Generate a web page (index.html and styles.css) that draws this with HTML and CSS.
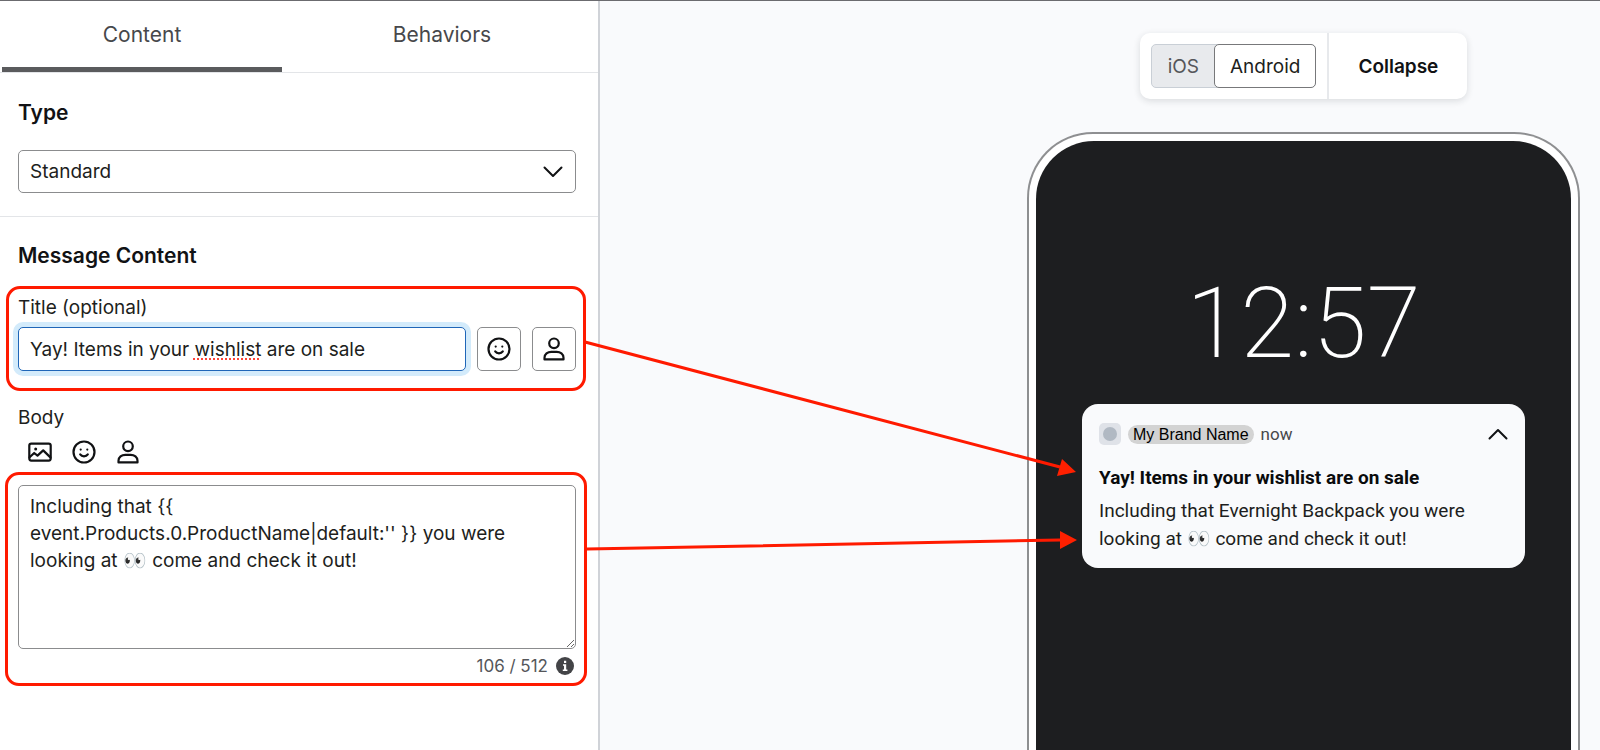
FILE: index.html
```html
<!DOCTYPE html>
<html lang="en">
<head>
<meta charset="utf-8">
<title>Push notification editor</title>
<link rel="stylesheet" href="styles.css">
</head>
<body>
<svg class="sprite" aria-hidden="true">
  <symbol id="i-smile" viewBox="0 0 24 24"><circle cx="12" cy="12" r="10.5"/><circle class="dot" cx="8.7" cy="9.6" r="1.1"/><circle class="dot" cx="15.3" cy="9.6" r="1.1"/><path d="M8.2 14.4c1.7 2.5 5.9 2.5 7.6 0"/></symbol>
  <symbol id="i-person" viewBox="0 0 24 24"><circle cx="12" cy="6.3" r="4.8"/><path d="M2.500 22.400v-1.600c0-3.600 3.200-6 6.800-6h5.400c3.600 0 6.800 2.400 6.800 6v1.600z"/></symbol>
  <symbol id="i-image" viewBox="0 0 24 24"><rect x="1.300" y="3.600" width="21.400" height="17" rx="2"/><path d="M1.600 17.300l4.600-4.300 3.300 2.600 5.700-5.200 7.200 7"/><circle class="dot" cx="7.700" cy="9" r="1.500"/></symbol>
</svg>
<div class="app">
  <main class="panel">
    <nav class="tabs">
      <button class="tab tab-active" type="button">Content</button>
      <button class="tab" type="button">Behaviors</button>
    </nav>
    <section class="section section-type">
      <h2 class="heading"><label for="type">Type</label></h2>
      <div class="select-wrap">
        <select class="control select" id="type"><option>Standard</option></select>
        <svg class="select-arrow" viewBox="0 0 20 12" aria-hidden="true"><path d="M1.500 1.500L10 10l8.500-8.500"/></svg>
      </div>
    </section>
    <section class="section section-message">
      <h2 class="heading">Message Content</h2>
      <div class="field title-field">
        <label class="label" for="title">Title (optional)</label>
        <div class="title-row">
          <div class="input-wrap">
            <input class="control input" id="title" type="text" value="Yay! Items in your wishlist are on sale">
            <span class="spelling"></span>
          </div>
          <button class="icon-button" type="button" aria-label="Insert emoji"><svg class="icon"><use href="#i-smile"/></svg></button>
          <button class="icon-button" type="button" aria-label="Insert profile property"><svg class="icon"><use href="#i-person"/></svg></button>
        </div>
      </div>
      <label class="label body-label" for="body">Body</label>
      <div class="tools">
        <button class="tool" type="button" aria-label="Insert image"><svg class="icon"><use href="#i-image"/></svg></button>
        <button class="tool" type="button" aria-label="Insert emoji"><svg class="icon"><use href="#i-smile"/></svg></button>
        <button class="tool" type="button" aria-label="Insert profile property"><svg class="icon"><use href="#i-person"/></svg></button>
      </div>
      <div class="field body-field">
        <textarea class="control textarea" id="body" spellcheck="false">Including that {{
event.Products.0.ProductName|default:'' }} you were
looking at 👀 come and check it out!</textarea>
        <div class="counter">
          <span>106 / 512</span>
          <svg class="info" viewBox="0 0 18 18" aria-hidden="true"><circle cx="9" cy="9" r="9"/><path d="M8 3.800h2.200v2.200H8zM7 7.300h3.200v5.200h1.200v1.500H6.800v-1.500H8V8.800H7z"/></svg>
        </div>
      </div>
    </section>
  </main>
  <aside class="preview">
    <div class="stage">
      <div class="toolbar">
        <div class="toolbar-part">
          <div class="segments">
            <button class="segment" type="button">iOS</button>
            <button class="segment segment-active" type="button">Android</button>
          </div>
        </div>
        <button class="collapse" type="button">Collapse</button>
      </div>
      <div class="phone">
        <div class="screen">
          <div class="clock">12:57</div>
          <article class="card">
            <header class="card-head">
              <span class="app-icon"></span>
              <span class="brand">My Brand Name</span>
              <span class="when">now</span>
              <svg class="card-arrow" viewBox="0 0 20 12" aria-hidden="true"><path d="M1.500 10.500L10 2l8.500 8.500"/></svg>
            </header>
            <h3 class="card-title">Yay! Items in your wishlist are on sale</h3>
            <p class="card-body">Including that Evernight Backpack you were looking at 👀 come and check it out!</p>
          </article>
        </div>
      </div>
    </div>
  </aside>
  <svg class="arrows" viewBox="0 0 1600 750" aria-hidden="true">
    <path class="line" d="M585 342L1060 467M587 549L1060 540"/>
    <path class="head" d="M1076 472L1062 459L1057 476zM1077 540L1060 531V549z"/>
  </svg>
</div>
</body>
</html>
```
FILE: styles.css
```css
* { box-sizing: border-box; }
body { margin: 0; font-family: Inter, "Liberation Sans", sans-serif; font-size: 19px; color: #1d1e20; }
button, input, select, textarea { font: inherit; color: inherit; margin: 0; }
.sprite { position: absolute; width: 0; height: 0; }
.app { position: relative; display: flex; min-height: 100vh; overflow: hidden; border-top: 1px solid #6b6b6f; background: #fff; }
.panel { flex: none; width: 37.5%; border-right: 2px solid #d0d3d8; }
.tabs { display: grid; grid-template-columns: 1fr 1fr; column-gap: 20px; padding: 0 16px 0 2px; height: 72px; border-bottom: 1px solid #e3e5e8; }
.tab { border: 0; background: none; padding: 0; font-size: 21px; color: #47484b; border-bottom: 5px solid transparent; }
.tab-active { border-bottom-color: #5a5b5d; border-radius: 3px 3px 0 0; }
.section { padding: 0 22px 0 18px; }
.section-type { padding-top: 26px; padding-bottom: 23px; border-bottom: 1px solid #e3e5e8; }
.heading { margin: 0; font-size: 21px; line-height: 28px; font-weight: 600; color: #111214; }
.control { display: block; width: 100%; border: 1px solid #8b8c8e; border-radius: 5px; background: #fff; outline: 0; }
.select-wrap { position: relative; margin-top: 23px; }
.select { height: 43px; padding: 0 40px 0 11px; appearance: none; }
.select-arrow { position: absolute; right: 13px; top: 16px; width: 20px; height: 12px; }
.select-arrow path, .card-arrow path { fill: none; stroke: #111214; stroke-width: 2; stroke-linecap: round; stroke-linejoin: round; }
.section-message { padding-top: 25px; }
.field { position: relative; }
.field::before { content: ""; position: absolute; border: 3px solid #ff1a00; border-radius: 14px; pointer-events: none; }
.title-field { margin-top: 25px; }
.title-field::before { inset: -9px -10px -20px -12px; }
.label { display: block; line-height: 26px; }
.title-row { display: flex; gap: 11px; margin-top: 6px; }
.input-wrap { position: relative; flex: 1; }
.input { height: 44px; padding: 0 11px; border-color: #1f66b8; box-shadow: 0 0 0 5px #d3ebfb; }
.spelling { position: absolute; left: 175px; top: 31px; width: 66px; border-bottom: 2px dotted #ff4438; }
.icon-button { flex: none; display: grid; place-items: center; width: 44px; height: 44px; padding: 0; border: 1px solid #8b8c8e; border-radius: 5px; background: #fff; }
.icon { width: 24px; height: 24px; fill: none; stroke: #111214; stroke-width: 2.2; stroke-linecap: round; stroke-linejoin: round; }
.dot { fill: #111214; stroke: none; }
.body-label { margin-top: 34px; }
.tools { display: flex; gap: 20px; padding: 9px 10px 21px; }
.tool { display: block; width: 24px; height: 24px; padding: 0; border: 0; background: none; }
.tool .icon { display: block; }
.body-field::before { inset: -13px -11px -7px -13px; }
.textarea { height: 164px; padding: 7px 11px; line-height: 27px; resize: both; }
.counter { display: flex; justify-content: flex-end; align-items: center; gap: 8px; padding: 4px 2px 0 0; font-size: 17px; line-height: 26px; color: #55565a; }
.info { width: 18px; height: 18px; fill: #434447; }
.info path { fill: #fff; }
.preview { flex: 1; display: flex; justify-content: flex-end; padding: 32px 20px 0; background: #f9fafc; }
.stage { display: flex; flex-direction: column; align-items: center; width: 553px; }
.toolbar { display: flex; border-radius: 10px; background: #fff; box-shadow: 0 2px 7px rgba(30, 35, 45, .14); }
.toolbar-part { padding: 11px; border-right: 2px solid #e7e9ec; }
.segments { display: flex; height: 44px; border-radius: 5px; background: #e8eaed; border: 1px solid #c9cfd6; }
.segment { padding: 0 16px; border: 0; background: none; color: #55565a; }
.segment-active { padding: 0 15px; margin: -1px; border: 1px solid #77787a; border-radius: 5px; background: #fff; color: #1d1e20; }
.collapse { padding: 0 29px; border: 0; background: none; font-weight: 600; color: #111214; }
.phone { flex: 1; display: flex; width: 100%; margin-top: 33px; padding: 7px 7px 0; border: 2px solid #8e8f91; border-bottom: 0; border-radius: 66px 66px 0 0; background: #fff; }
.screen { flex: 1; padding: 130px 46px 0; border-radius: 58px 58px 0 0; background: #1d1e20; font-family: Roboto, "Liberation Sans", sans-serif; }
.clock { font-size: 98px; line-height: 106px; font-weight: 200; text-align: center; color: #fff; }
.card { margin-top: 27px; padding: 19px 17px 15px; border-radius: 16px; background: #f9fafc; }
.card-head { display: flex; align-items: center; gap: 7px; height: 22px; font-size: 17px; }
.app-icon { display: grid; place-items: center; width: 22px; height: 22px; border-radius: 5px; background: #dfe2e8; }
.app-icon::before { content: ""; width: 14px; height: 14px; border-radius: 50%; background: #b1b9c3; }
.brand { padding: 0 5px; border-radius: 10px; background: #d3d3d3; font-family: "Liberation Sans", Arial, sans-serif; font-size: 16px; line-height: 19px; color: #000; }
.when { color: #47484b; }
.card-arrow { width: 20px; height: 12px; margin-left: auto; }
.card-title { margin: 19px 0 5px; font-size: 19px; line-height: 28px; font-weight: 700; color: #0a0b0c; }
.card-body { margin: 0; font-size: 19px; line-height: 28px; }
.arrows { position: absolute; left: 0; top: -1px; width: 100%; pointer-events: none; }
.line { fill: none; stroke: #ff1a00; stroke-width: 3; }
.head { fill: #ff2000; }
```
